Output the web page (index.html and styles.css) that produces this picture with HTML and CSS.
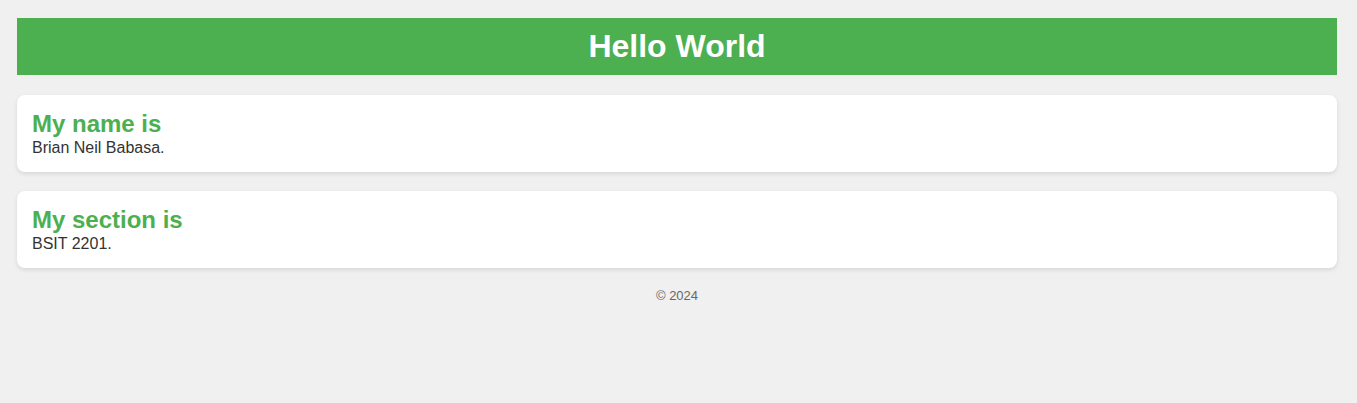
FILE: index.html
```html
<!DOCTYPE html>
<html lang="en">
<head>
<meta charset="UTF-8">
<title>Hello World</title>
<link rel="stylesheet" href="styles.css">
</head>
<body>
<header class="site-header">
  <h1 class="site-title">Hello World</h1>
</header>
<main class="content">
  <section class="card">
    <h2 class="card-title">My name is</h2>
    <p class="card-text">Brian Neil Babasa.</p>
  </section>
  <section class="card">
    <h2 class="card-title">My section is</h2>
    <p class="card-text">BSIT 2201.</p>
  </section>
</main>
<footer class="site-footer">© 2024</footer>
</body>
</html>
```
FILE: styles.css
```css
html, body {
  margin: 0;
  background: #f0f0f0;
}
body {
  padding: 18px 20px 18px 17px;
  font-family: "Liberation Sans", Arial, sans-serif;
  color: #333;
}
.site-header {
  background: #4caf50;
  height: 57px;
  display: flex;
  align-items: center;
  justify-content: center;
}
.site-title {
  margin: 0;
  color: #fff;
  font-size: 32px;
  font-weight: bold;
  line-height: 37px;
}
.content {
  display: flex;
  flex-direction: column;
  gap: 19px;
  margin-top: 20px;
}
.card {
  background: #fff;
  border-radius: 8px;
  box-shadow: 0 2px 4px rgba(0, 0, 0, 0.1);
  padding: 15px;
}
.card-title {
  margin: 0;
  color: #4caf50;
  font-size: 24px;
  line-height: 28px;
  font-weight: bold;
}
.card-text {
  margin: 0;
  font-size: 16px;
  line-height: 19px;
  color: #333;
}
.site-footer {
  margin-top: 20px;
  text-align: center;
  font-size: 13px;
  line-height: 16px;
  color: #666;
}
```
